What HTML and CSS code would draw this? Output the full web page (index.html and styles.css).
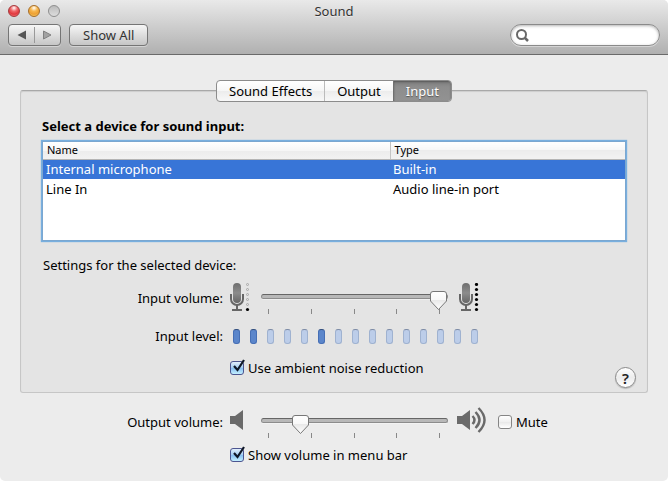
FILE: index.html
```html
<!DOCTYPE html>
<html lang="en">
<head>
    <meta charset="UTF-8">
    <meta name="viewport" content="width=device-width, initial-scale=1.0">
    <title>Sound</title>
    <link rel="stylesheet" href="styles.css">
</head>
<body>

    <!-- Shared icon shapes -->
    <svg class="defs" width="0" height="0" aria-hidden="true">
        <defs>
            <linearGradient id="metal" x1="0" y1="0" x2="0" y2="1">
                <stop offset="0" stop-color="#6e6e6e"/>
                <stop offset="0.5" stop-color="#8c8c8c"/>
                <stop offset="1" stop-color="#666"/>
            </linearGradient>
            <g id="mic">
                <rect x="3" y="0" width="8" height="20" rx="4" fill="url(#metal)"/>
                <path d="M1 11v5a6 6 0 0 0 12 0v-5" fill="none" stroke="#666" stroke-width="2"/>
                <path d="M7 22v5M2 27h10" fill="none" stroke="#666" stroke-width="2"/>
            </g>
        </defs>
    </svg>

    <div class="window">
        <header class="header">
            <div class="titlebar">
                <div class="lights">
                    <button type="button" class="light close" aria-label="Close"></button>
                    <button type="button" class="light minimize" aria-label="Minimize"></button>
                    <button type="button" class="light zoom" aria-label="Zoom" disabled></button>
                </div>
                <h1 class="title">Sound</h1>
            </div>
            <div class="toolbar">
                <div class="nav">
                    <button type="button" class="nav-button" aria-label="Back">
                        <svg width="9" height="10" viewBox="0 0 9 10"><path d="M9 .5v9L.5 5z" fill="#555"/></svg>
                    </button>
                    <button type="button" class="nav-button" aria-label="Forward">
                        <svg width="9" height="10" viewBox="0 0 9 10"><path d="M.5 1v8L8 5z" fill="#a2a2a2" stroke="#808080"/></svg>
                    </button>
                </div>
                <button type="button" class="show-all">Show All</button>
                <label class="search">
                    <svg width="13" height="13" viewBox="0 0 13 13" aria-hidden="true">
                        <circle cx="5.5" cy="5.5" r="4.5" fill="none" stroke="#686868" stroke-width="2"/>
                        <path d="M8.5 8.5l3.5 3.5" stroke="#686868" stroke-width="2.5"/>
                    </svg>
                    <input type="search" class="search-input" aria-label="Search">
                </label>
            </div>
        </header>

        <main class="content">
            <div class="tabs" role="tablist">
                <button type="button" class="tab" role="tab">Sound Effects</button>
                <button type="button" class="tab" role="tab">Output</button>
                <button type="button" class="tab active" role="tab" aria-selected="true">Input</button>
            </div>

            <!-- Input panel -->
            <section class="panel">
                <h2 class="heading">Select a device for sound input:</h2>
                <div class="list">
                    <table class="devices">
                        <thead>
                            <tr><th>Name</th><th>Type</th></tr>
                        </thead>
                        <tbody>
                            <tr class="selected"><td>Internal microphone</td><td>Built-in</td></tr>
                            <tr><td>Line In</td><td>Audio line-in port</td></tr>
                        </tbody>
                    </table>
                </div>

                <p class="caption">Settings for the selected device:</p>

                <div class="row volume">
                    <label class="label" for="input-volume">Input volume:</label>
                    <svg class="icon" width="22" height="30" viewBox="0 0 22 30" aria-hidden="true">
                        <use href="#mic"/>
                        <g fill="none" stroke="#a6a6a6">
                            <circle cx="17.5" cy="1.5" r="1"/>
                            <circle cx="17.5" cy="6.5" r="1"/>
                            <circle cx="17.5" cy="11.5" r="1"/>
                            <circle cx="17.5" cy="16.5" r="1"/>
                            <circle cx="17.5" cy="21.5" r="1"/>
                        </g>
                        <circle cx="17.5" cy="26.5" r="1.6" fill="#000"/>
                    </svg>
                    <div class="slider">
                        <input type="range" class="range" id="input-volume" min="0" max="100" value="100">
                        <div class="ticks"><i></i><i></i><i></i><i></i><i></i></div>
                    </div>
                    <svg class="icon" width="30" height="30" viewBox="-3 0 30 30" aria-hidden="true">
                        <use href="#mic"/>
                        <g fill="#000">
                            <circle cx="17.5" cy="1.5" r="1.6"/>
                            <circle cx="17.5" cy="6.5" r="1.6"/>
                            <circle cx="17.5" cy="11.5" r="1.6"/>
                            <circle cx="17.5" cy="16.5" r="1.6"/>
                            <circle cx="17.5" cy="21.5" r="1.6"/>
                            <circle cx="17.5" cy="26.5" r="1.6"/>
                        </g>
                    </svg>
                </div>

                <div class="row level">
                    <span class="label" id="level-label">Input level:</span>
                    <div class="meter" role="meter" aria-labelledby="level-label" aria-valuemin="0" aria-valuemax="15" aria-valuenow="2">
                        <i class="on"></i><i class="on"></i><i></i><i></i><i></i>
                        <i class="on"></i><i></i><i></i><i></i><i></i>
                        <i></i><i></i><i></i><i></i><i></i>
                    </div>
                </div>

                <div class="options">
                    <label class="check"><input type="checkbox" class="box" checked>Use ambient noise reduction</label>
                    <button type="button" class="help" aria-label="Help">?</button>
                </div>
            </section>

            <!-- Output volume -->
            <section class="output">
                <div class="row volume">
                    <label class="label" for="output-volume">Output volume:</label>
                    <svg class="icon" width="22" height="30" viewBox="0 0 22 30" aria-hidden="true">
                        <path d="M0 9h5l8-6v20l-8-6H0z" fill="#6a6a6a"/>
                    </svg>
                    <div class="slider">
                        <input type="range" class="range" id="output-volume" min="0" max="100" value="18">
                        <div class="ticks"><i></i><i></i><i></i><i></i><i></i></div>
                    </div>
                    <svg class="icon" width="30" height="30" viewBox="0 0 30 30" aria-hidden="true">
                        <path d="M1 9h5l8-6v20l-8-6H1z" fill="#6a6a6a"/>
                        <g fill="none" stroke="#6a6a6a" stroke-width="2.4">
                            <path d="M16.5 9q4 4 0 8"/>
                            <path d="M19.5 5q8 8 0 16"/>
                            <path d="M22.5 1q12 12 0 24"/>
                        </g>
                    </svg>
                    <label class="check mute"><input type="checkbox" class="box">Mute</label>
                </div>
                <div class="menu-option">
                    <label class="check"><input type="checkbox" class="box" checked>Show volume in menu bar</label>
                </div>
            </section>
        </main>
    </div>

</body>
</html>
```
FILE: styles.css
```css
* {
    box-sizing: border-box;
}
body {
    margin: 0;
    background: #fff;
    color: #000;
    font-family: "Noto Sans", "Open Sans", sans-serif;
    font-size: 13px;
    line-height: 18px;
}
button, input {
    font: inherit;
    margin: 0;
    padding: 0;
}
.defs {
    position: absolute;
}
.window {
    min-height: 100vh;
    background: #ececec;
    border-radius: 5px;
    overflow: hidden;
}

/* Header */
.header {
    background: linear-gradient(#e9e9e9, #b0b0b0);
    border-bottom: 1px solid #6a6a6a;
}
.titlebar {
    display: grid;
    grid-template-columns: 1fr auto 1fr;
    align-items: center;
    height: 22px;
    margin-bottom: 2px;
    padding: 0 8px;
}
.lights {
    display: flex;
    gap: 8px;
}
.light {
    width: 12px;
    height: 12px;
    border: 1px solid #8e8e8e;
    border-radius: 50%;
}
.close {
    background: radial-gradient(circle at 50% 20%, #fff 0, #f0696b 35%, #e0383e 65%, #f88 100%);
    border-color: #a4393c;
}
.minimize {
    background: radial-gradient(circle at 50% 20%, #fff 0, #f7b850 35%, #eda033 65%, #fde27c 100%);
    border-color: #a56d28;
}
.zoom {
    background: linear-gradient(#bbb, #ddd);
}
.title {
    margin: 0;
    color: #333;
    font-size: 13px;
    font-weight: 400;
    text-shadow: 0 1px rgba(255, 255, 255, 0.5);
}
.toolbar {
    display: flex;
    gap: 8px;
    padding: 0 8px 8px;
}
.nav, .show-all {
    height: 22px;
    border: 1px solid #757575;
    border-radius: 4px;
    background: linear-gradient(#f6f6f6, #c6c6c6);
    box-shadow: 0 1px rgba(255, 255, 255, 0.4);
}
.nav {
    display: flex;
    align-items: center;
    width: 53px;
}
.nav-button {
    display: flex;
    flex: 1;
    align-items: center;
    justify-content: center;
    height: 16px;
    border: 0;
    background: none;
}
.nav-button + .nav-button {
    border-left: 1px solid #999;
}
.show-all {
    padding: 0 13px;
    color: #333;
}
.search {
    display: flex;
    align-items: center;
    gap: 4px;
    width: 150px;
    height: 22px;
    margin-left: auto;
    padding: 0 5px;
    border: 1px solid #8a8a8a;
    border-radius: 11px;
    background: #fff;
    box-shadow: inset 0 1px 3px rgba(0, 0, 0, 0.3), 0 1px rgba(255, 255, 255, 0.4);
}
.search-input {
    flex: 1;
    min-width: 0;
    border: 0;
    outline: 0;
    background: none;
}

/* Tabs */
.content {
    padding: 25px 20px 16px;
}
.tabs {
    position: relative;
    display: flex;
    width: max-content;
    height: 22px;
    margin: 0 auto -12px;
    border: 1px solid #8c8c8c;
    border-radius: 4px;
    background: linear-gradient(#fff, #f6f6f6 50%, #ececec 50%, #f8f8f8);
    overflow: hidden;
}
.tab {
    padding: 0 12px;
    border: 0;
    background: none;
    color: #000;
}
.tab + .tab {
    border-left: 1px solid #bbb;
}
.tab.active {
    border-color: #707070;
    background: linear-gradient(#7c7c7c, #8d8d8d 30%, #929292);
    box-shadow: inset 0 1px 2px rgba(0, 0, 0, 0.3);
    color: #fff;
    text-shadow: 0 1px 1px #555;
}

/* Input panel */
.panel {
    padding-top: 26px;
    border: 1px solid #c6c6c6;
    border-top-color: #a8a8a8;
    border-radius: 3px;
    background: #e4e4e4;
    box-shadow: inset 0 1px 1px rgba(0, 0, 0, 0.1);
}
.heading {
    margin: 0 21px 7px;
    font-size: 13px;
    font-weight: 700;
}
.list {
    min-height: 98px;
    margin: 0 22px;
    background: #fff;
    box-shadow: 0 0 0 1px #7ba7d0, 0 0 1px 2px #78afdf;
}
.devices {
    width: 100%;
    border-collapse: collapse;
    table-layout: fixed;
}
.devices th {
    height: 17px;
    padding: 0 4px;
    border-bottom: 1px solid #b5b5b5;
    background: linear-gradient(#fff, #f6f6f6 50%, #ececec 50%, #f2f2f2);
    font-size: 11px;
    font-weight: 400;
    line-height: 16px;
    text-align: left;
}
.devices th:first-child {
    border-right: 1px solid #c4c4c4;
}
.devices th:last-child {
    width: 235px;
}
.devices td {
    height: 20px;
    padding: 0 3px;
}
.selected td {
    background: #3875d7;
    color: #fff;
}
.caption {
    margin: 16px 22px 9px;
}

/* Settings rows */
.row {
    display: flex;
    align-items: center;
}
.label {
    width: 202px;
    margin-right: 7px;
    text-align: right;
}
.volume {
    height: 30px;
}
.icon {
    flex: none;
}
.slider {
    align-self: flex-start;
    width: 187px;
    margin: 0 8px 0 9px;
    padding-top: 4px;
}
.range {
    display: block;
    width: 100%;
    height: 19px;
    appearance: none;
    background: none;
}
.range::-webkit-slider-runnable-track {
    height: 5px;
    border: 1px solid #8c8c8c;
    border-top-color: #666;
    border-radius: 3px;
    background: #b8b8b8;
    box-shadow: 0 1px rgba(255, 255, 255, 0.4);
}
.range::-webkit-slider-thumb {
    width: 17px;
    height: 20px;
    margin-top: -4px;
    appearance: none;
    background: url("data:image/svg+xml,%3Csvg xmlns='http://www.w3.org/2000/svg' width='17' height='20'%3E%3ClinearGradient id='g' x2='0' y2='1'%3E%3Cstop stop-color='%23fff'/%3E%3Cstop offset='.45' stop-color='%23f8f8f8'/%3E%3Cstop offset='.5' stop-color='%23e9e9e9'/%3E%3Cstop offset='1' stop-color='%23fff'/%3E%3C/linearGradient%3E%3Cpath d='M3 .5h11q2.5 0 2.5 2.5v7l-8 8.5l-8-8.5V3Q.5 .5 3 .5z' fill='url(%23g)' stroke='%23777'/%3E%3C/svg%3E") no-repeat;
}
.ticks {
    display: flex;
    justify-content: space-between;
    margin-top: 3px;
    padding: 0 8px 0 7px;
}
.ticks i {
    width: 1px;
    height: 5px;
    background: #888;
}
.level {
    margin: 14px 0;
}
.meter {
    display: flex;
    gap: 10px;
    margin-left: 3px;
}
.meter i {
    width: 7px;
    height: 15px;
    border: 1px solid #9fb2d0;
    border-top-color: #7e8ca6;
    border-radius: 3px;
    background: #bccde9;
}
.meter .on {
    border-color: #466fb5;
    border-top-color: #33507f;
    background: #5b86cb;
}

/* Check boxes */
.check {
    display: flex;
    align-items: center;
    gap: 4px;
}
.box {
    position: relative;
    width: 14px;
    height: 14px;
    border: 1px solid #858585;
    border-radius: 3px;
    appearance: none;
    background: linear-gradient(#fff, #f0f0f0 50%, #e8e8e8 50%, #fff);
}
.box:checked {
    border-color: #4c5590;
    background: linear-gradient(#e2effc, #a3cdf4 50%, #85bdf2 50%, #c4f0ff);
}
.box:checked::after {
    content: "";
    position: absolute;
    left: 1px;
    top: -3px;
    width: 14px;
    height: 14px;
    background: url("data:image/svg+xml,%3Csvg xmlns='http://www.w3.org/2000/svg' width='14' height='14'%3E%3Cpath d='M2 7l3.5 4L12 1' fill='none' stroke='%23101828' stroke-width='2.2'/%3E%3C/svg%3E");
}
.options {
    display: flex;
    align-items: flex-start;
    justify-content: space-between;
    padding: 0 11px 4px 209px;
}
.help {
    width: 21px;
    height: 21px;
    margin-top: 8px;
    border: 1px solid #8a8a8a;
    border-radius: 50%;
    background: linear-gradient(#fff, #ececec 50%, #fff);
    box-shadow: 0 1px 1px rgba(0, 0, 0, 0.2);
    color: #222;
    font-size: 15px;
    font-weight: 600;
    line-height: 18px;
}

/* Output volume */
.output {
    padding: 14px 1px 0;
}
.mute {
    margin-left: 12px;
}
.menu-option {
    display: flex;
    margin: 9px 0 0 209px;
}
```
